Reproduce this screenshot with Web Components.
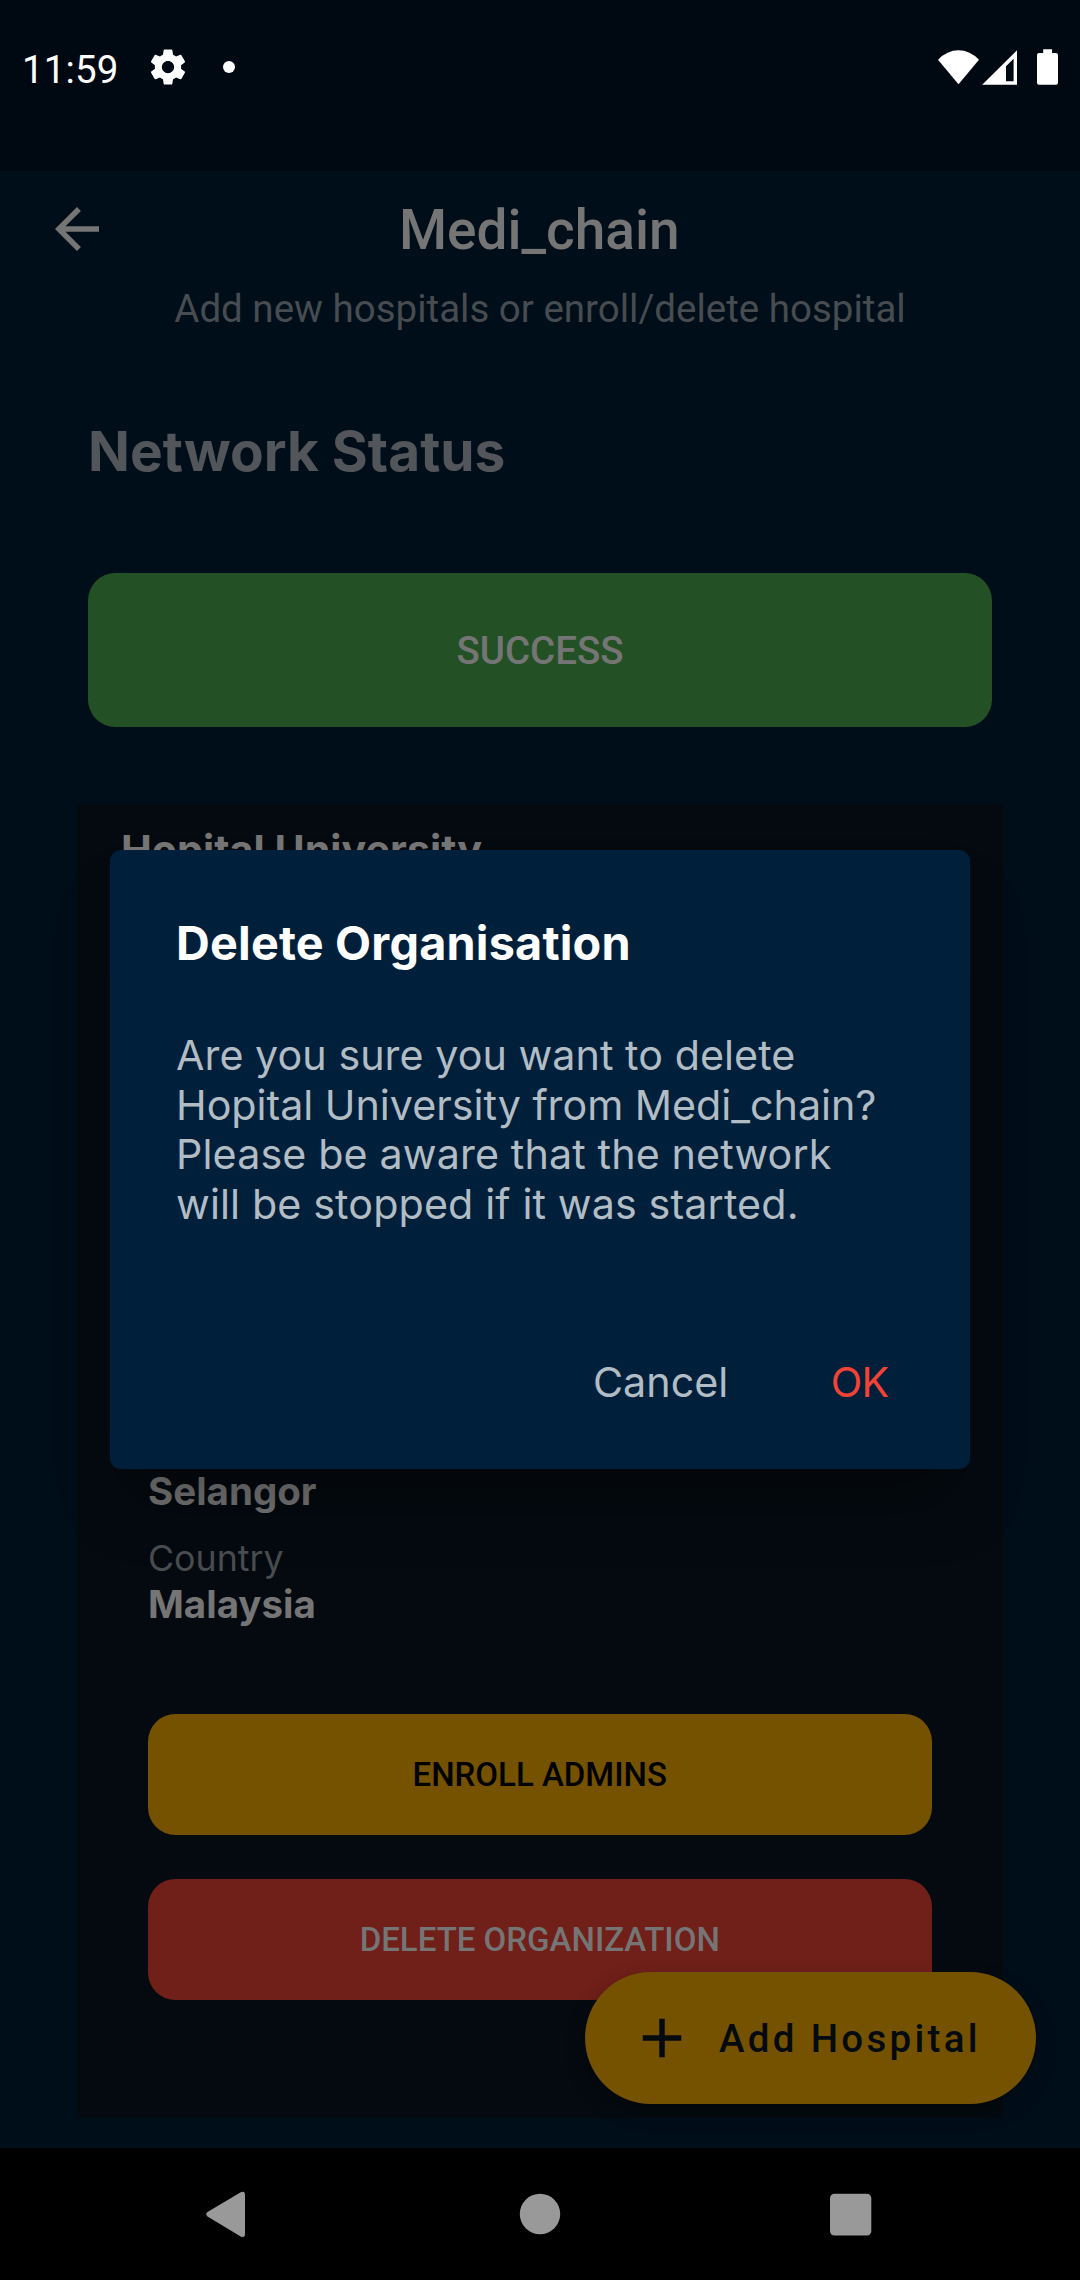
<!DOCTYPE html>
<html lang="en">
<head>
<meta charset="utf-8">
<title>Medi_chain</title>
<style>
  html, body { margin: 0; background: #000; }
</style>
</head>
<body>
<phone-screen>
  <status-bar slot="status">11:59</status-bar>
  <app-page>
    <app-header>Medi_chain<span slot="subtitle">Add new hospitals or enroll/delete hospital</span></app-header>
    <network-status label="Network Status">SUCCESS</network-status>
    <org-card>
      <span slot="name">Hopital University</span>
      <org-field slot="field">Selangor</org-field>
      <org-field slot="field" label="Country">Malaysia</org-field>
      <app-button slot="action" tone="amber">ENROLL ADMINS</app-button>
      <app-button slot="action" tone="red">DELETE ORGANIZATION</app-button>
    </org-card>
    <fab-button slot="fab">Add Hospital</fab-button>
  </app-page>
  <confirm-dialog slot="dialog">
    <span slot="title">Delete Organisation</span>
    <text-line style="letter-spacing:.04px">Are you sure you want to delete</text-line>
    <text-line style="letter-spacing:-.03px">Hopital University from Medi_chain?</text-line>
    <text-line style="letter-spacing:.12px">Please be aware that the network</text-line>
    <text-line style="letter-spacing:.12px">will be stopped if it was started.</text-line>
    <span slot="cancel">Cancel</span>
    <span slot="ok">OK</span>
  </confirm-dialog>
  <nav-bar slot="nav"></nav-bar>
</phone-screen>

<script>
function define(name, html, setup) {
  const template = document.createElement('template');
  template.innerHTML = html;
  customElements.define(name, class extends HTMLElement {
    constructor() {
      super();
      this.attachShadow({ mode: 'open' }).append(template.content.cloneNode(true));
    }
    connectedCallback() { if (setup) setup(this, this.shadowRoot); }
  });
}

define('phone-screen', `
  <style>
    :host { display: flex; flex-direction: column; position: relative; width: 1080px; height: 2280px;
            overflow: hidden; font-family: Roboto, sans-serif; background: #000e1a; color: #757575; }
    main { flex: 1; min-height: 0; display: flex; }
    .overlay { position: absolute; left: 110px; top: 850px; }
  </style>
  <slot name="status"></slot>
  <main><slot></slot></main>
  <slot name="nav"></slot>
  <div class="overlay"><slot name="dialog"></slot></div>`);

define('status-bar', `
  <style>
    :host { display: flex; align-items: flex-start; justify-content: space-between; box-sizing: border-box;
            height: 171px; padding: 46px 22px 0; background: #000811; color: #fff;
            font-size: 38.5px; line-height: 45px; }
    div { display: flex; align-items: flex-start; }
    .time { padding-top: 1px; width: 125px; letter-spacing: .15px; }
    svg { display: block; fill: #fff; }
    .dot { width: 12px; height: 12px; border-radius: 50%; background: #fff; margin: 15px 0 0 34px; }
  </style>
  <div>
    <span class="time"><slot></slot></span>
    <svg width="42" height="42" viewBox="0 0 24 24"><path d="M19.43 12.98c.04-.32.07-.64.07-.98s-.03-.66-.07-.98l2.11-1.65c.19-.15.24-.42.12-.64l-2-3.46c-.12-.22-.39-.3-.61-.22l-2.49 1c-.52-.4-1.08-.73-1.69-.98l-.38-2.65C14.46 2.18 14.25 2 14 2h-4c-.25 0-.46.18-.49.42l-.38 2.65c-.61.25-1.17.59-1.69.98l-2.49-1c-.23-.09-.49 0-.61.22l-2 3.46c-.13.22-.07.49.12.64l2.11 1.65c-.04.32-.07.65-.07.98s.03.66.07.98l-2.11 1.65c-.19.15-.24.42-.12.64l2 3.46c.12.22.39.3.61.22l2.49-1c.52.4 1.08.73 1.69.98l.38 2.65c.03.24.24.42.49.42h4c.25 0 .46-.18.49-.42l.38-2.65c.61-.25 1.17-.59 1.69-.98l2.49 1c.23.09.49 0 .61-.22l2-3.46c.12-.22.07-.49-.12-.64l-2.11-1.65zM12 15.5c-1.93 0-3.5-1.57-3.5-3.5s1.57-3.5 3.5-3.5 3.5 1.57 3.5 3.5-1.57 3.5-3.5 3.5z"/></svg>
    <span class="dot"></span>
  </div>
  <svg width="122" height="40" viewBox="936 46 122 40">
    <path d="M958.5 84.3 938 59.7Q947 50.2 958.5 50.2T979 59.7Z"/>
    <path fill-rule="evenodd" d="M982.2 84.8 1017 50.2V84.8ZM1006 66.3V81.2H1013.6V58.8Z"/>
    <path d="M1043.2 53V49.2H1052.1V53H1056a2 2 0 0 1 2 2V82.8a2 2 0 0 1-2 2H1039a2 2 0 0 1-2-2V55a2 2 0 0 1 2-2Z"/>
  </svg>`);

define('app-page', `
  <style>
    :host { flex: 1; display: flex; flex-direction: column; position: relative; }
    .fab { position: absolute; right: 44px; bottom: 44px; }
  </style>
  <slot></slot>
  <div class="fab"><slot name="fab"></slot></div>`);

define('app-header', `
  <style>
    :host { display: block; padding-top: 25px; text-align: center; }
    .bar { display: grid; grid-template-columns: 110px 1fr 110px; align-items: center; height: 66px; }
    svg { display: block; margin-left: 44px; fill: #757575; }
    h1 { margin: 0; padding: 2px 1.5px 0 0; font-size: 55px; line-height: 64px; font-weight: 500; }
    p { margin: 24px 0 0; font-size: 38.5px; line-height: 45px; color: #464c50; }
  </style>
  <div class="bar">
    <svg width="66" height="66" viewBox="0 0 24 24"><path d="M20 11H7.83l5.59-5.59L12 4l-8 8 8 8 1.41-1.41L7.83 13H20v-2z"/></svg>
    <h1><slot></slot></h1>
  </div>
  <p><slot name="subtitle"></slot></p>`);

define('network-status', `
  <style>
    :host { display: block; padding: 87px 88px 0; }
    h2 { margin: 0 0 89px; font: 700 55px/66px Inter, sans-serif; color: #52565a; }
    div { display: flex; align-items: center; justify-content: center; box-sizing: border-box; height: 154px;
          padding-top: 2px; border-radius: 27.5px;
          background: #235125; font-size: 38.5px; line-height: 46px; font-weight: 500; }
  </style>
  <h2></h2>
  <div><slot></slot></div>`,
  (host, root) => { root.querySelector('h2').textContent = host.getAttribute('label'); });

define('org-card', `
  <style>
    :host { display: flex; flex-direction: column; box-sizing: border-box; width: 926px; height: 1314px;
            margin: 77px 77px 0; padding: 21px 71.5px 117.75px 71px; background: #040a10; }
    .name { margin-left: -27px; font: 700 41.25px/50px Inter, sans-serif; }
    .fields { display: flex; flex-direction: column; gap: 22px; margin-top: auto; }
    .actions { display: flex; flex-direction: column; gap: 44px; margin-top: 87.25px; }
  </style>
  <div class="name"><slot name="name"></slot></div>
  <div class="fields"><slot name="field"></slot></div>
  <div class="actions"><slot name="action"></slot></div>`);

define('org-field', `
  <style>
    :host { display: flex; flex-direction: column; gap: 1px; font-family: Inter, sans-serif; }
    .label { font-size: 35.75px; line-height: 44px; color: #4a4d50; }
    .label:empty { display: none; }
    .value { font-size: 38.5px; line-height: 46px; font-weight: 700; }
  </style>
  <span class="label"></span>
  <span class="value"><slot></slot></span>`,
  (host, root) => { root.querySelector('.label').textContent = host.getAttribute('label') || ''; });

define('app-button', `
  <style>
    :host { display: flex; align-items: center; justify-content: center; height: 121px; border-radius: 27.5px;
            font-size: 33px; line-height: 39px; font-weight: 500; }
    :host([tone=amber]) { background: #755200; color: #000; }
    :host([tone=red]) { background: #701f19; color: #757575; }
  </style>
  <slot></slot>`);

define('fab-button', `
  <style>
    :host { display: flex; align-items: center; box-sizing: border-box; width: 451px; height: 132px;
            padding-left: 44px; gap: 24px; border-radius: 66px; background: #755200; color: #040a10;
            font-size: 38.5px; line-height: 45px; font-weight: 500; letter-spacing: 3.3px; white-space: nowrap;
            box-shadow: 0 9px 20px rgba(0, 0, 0, .32); }
    svg { display: block; fill: #040a10; }
  </style>
  <svg width="66" height="66" viewBox="0 0 24 24"><path d="M19 13h-6v6h-2v-6H5v-2h6V5h2v6h6v2z"/></svg>
  <span><slot></slot></span>`);

define('confirm-dialog', `
  <style>
    :host { display: flex; flex-direction: column; box-sizing: border-box; width: 860px; height: 619px;
            padding: 65px 66px 62px; border-radius: 11px; background: #001f3a; color: #b2bcc4;
            font: 400 41.25px/50px Inter, sans-serif; box-shadow: 0 44px 60px -12px rgba(0, 0, 0, .3); }
    h3 { margin: 0 0 60px; font-size: 46.75px; line-height: 56px; font-weight: 700; letter-spacing: .2px; color: #fff; }
    footer { display: flex; justify-content: flex-end; gap: 102.4px; margin: auto 15.5px 0 0; }
    .ok { color: #f44336; letter-spacing: -.7px; }
  </style>
  <h3><slot name="title"></slot></h3>
  <div><slot></slot></div>
  <footer><span><slot name="cancel"></slot></span><span class="ok"><slot name="ok"></slot></span></footer>`);

define('text-line', `
  <style>:host { display: block; line-height: 49.67px; white-space: nowrap; }</style>
  <slot></slot>`);

define('nav-bar', `
  <style>
    :host { display: block; height: 132px; background: #000; }
    svg { display: block; fill: #999; }
  </style>
  <svg width="1080" height="132" viewBox="0 2148 1080 132">
    <path d="M207.5 2212 240.7 2192.3Q245 2190.6 245 2195.3V2233.7Q245 2238.4 240.7 2236.4L207.5 2216.4Q205 2214.2 207.5 2212Z"/>
    <circle cx="540" cy="2214" r="20.2"/>
    <rect x="830" y="2193.7" width="41.3" height="41.8" rx="4.5"/>
  </svg>`);
</script>
</body>
</html>
